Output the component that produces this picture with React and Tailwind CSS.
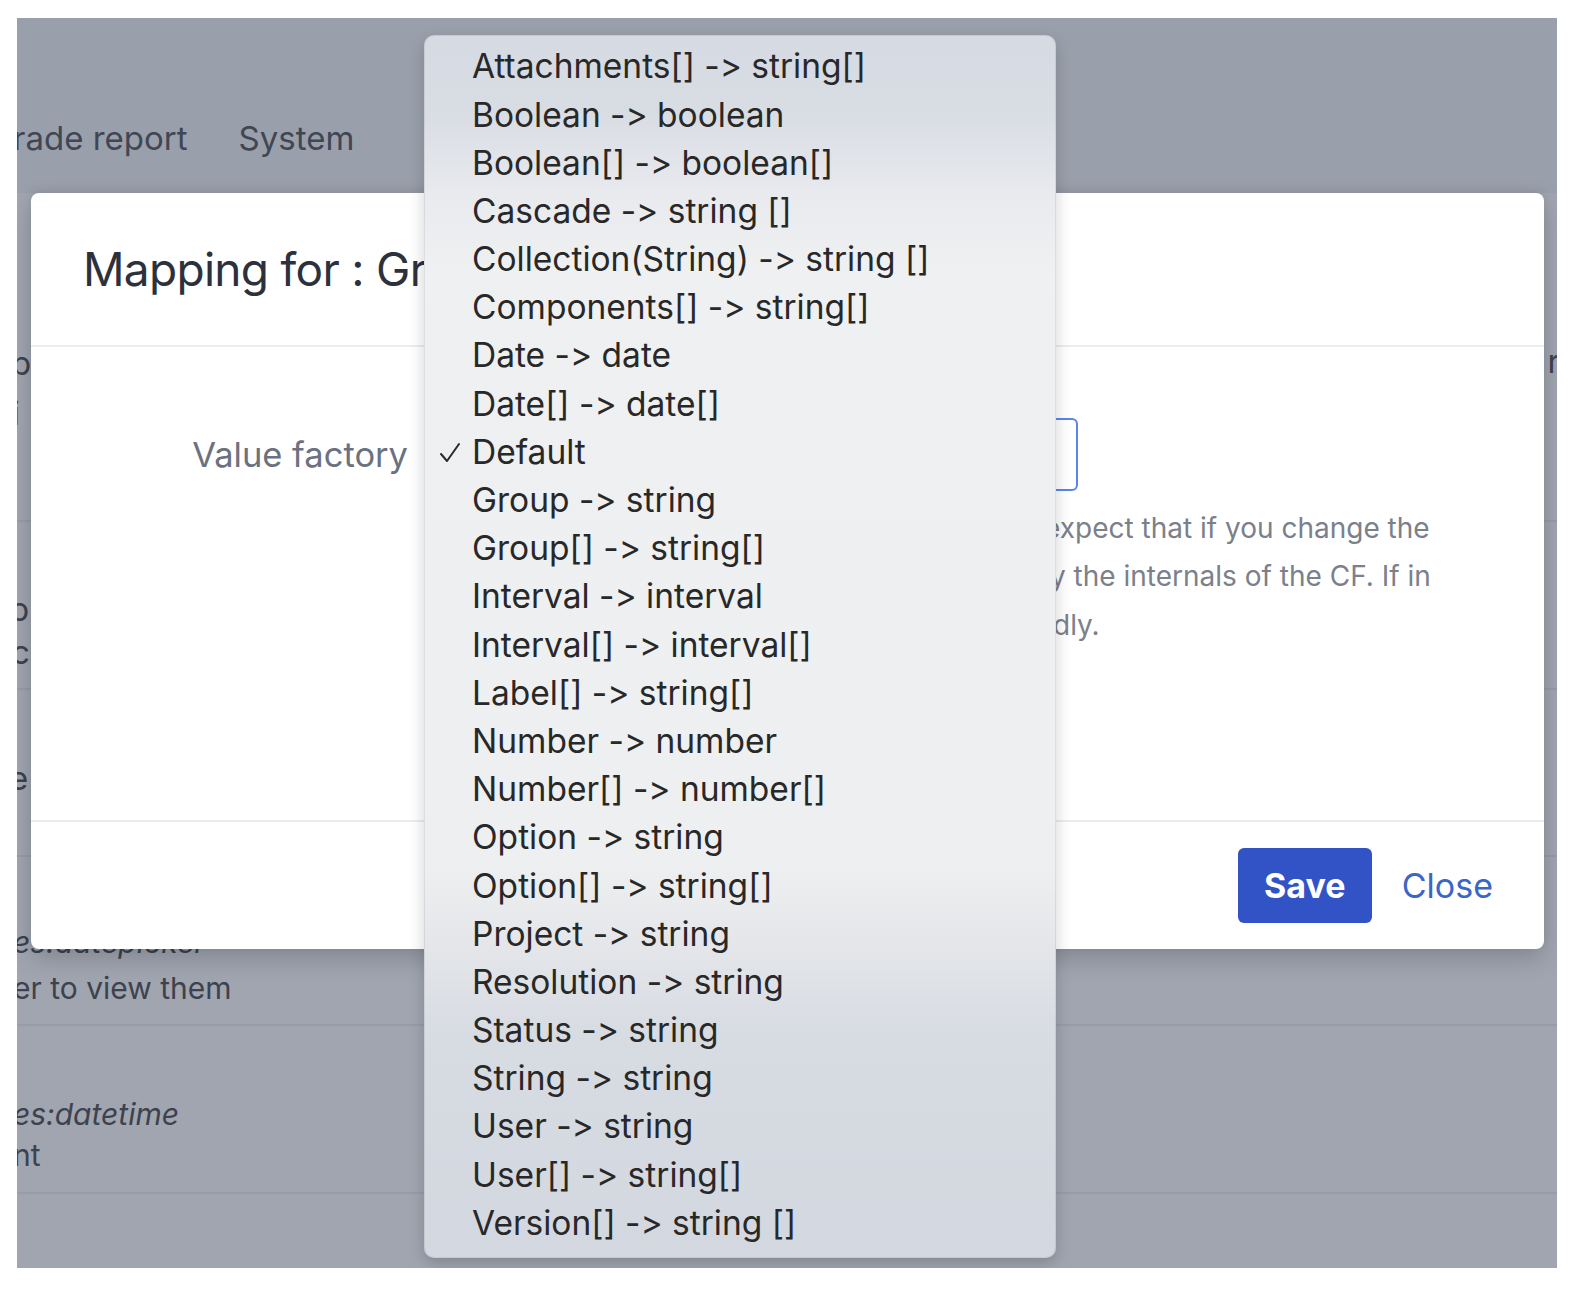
import React from "react";

const items = [
  "Attachments[] -> string[]",
  "Boolean -> boolean",
  "Boolean[] -> boolean[]",
  "Cascade -> string []",
  "Collection(String) -> string []",
  "Components[] -> string[]",
  "Date -> date",
  "Date[] -> date[]",
  "Default",
  "Group -> string",
  "Group[] -> string[]",
  "Interval -> interval",
  "Interval[] -> interval[]",
  "Label[] -> string[]",
  "Number -> number",
  "Number[] -> number[]",
  "Option -> string",
  "Option[] -> string[]",
  "Project -> string",
  "Resolution -> string",
  "Status -> string",
  "String -> string",
  "User -> string",
  "User[] -> string[]",
  "Version[] -> string []",
];

function Check() {
  return (
    <svg width="22" height="22" viewBox="0 0 22 22" fill="none">
      <polyline points="2,12 8,19 20,2" stroke="#2a2a2a" strokeWidth="2" strokeLinecap="round" strokeLinejoin="round" />
    </svg>
  );
}

export default function App() {
  return (
    <div className="w-[1580px] h-[1292px] bg-white pt-[18px] pl-[17px] font-[Inter,'Noto_Sans',sans-serif] [font-variant-ligatures:no-contextual] [font-feature-settings:'calt'_0]">
      <div className="relative w-[1540px] h-[1250px] overflow-hidden bg-[#a0a5b0]">
        {/* background page */}
        <div className="flex flex-col">
          <div className="h-[175px] bg-[#9aa0ab] pt-[100px]">
            <div className="flex items-center gap-[51px] text-[33px] leading-[40px] text-[#414654]">
              <span className="ml-[-4px]">rade report</span>
              <span>System</span>
            </div>
          </div>
          <div className="h-[329px] border-b-2 border-[#979ca7] pt-[145px] text-[33px] leading-[50px] text-[#3d424e] flex justify-between">
            <div className="flex flex-col">
              <span className="ml-[-6px]">p</span>
              <span className="ml-[-5px]">i</span>
            </div>
            <span className="mr-[-3px] mt-[-2px]">r</span>
          </div>
          <div className="h-[168px] border-b-2 border-[#979ca7] pt-[66px] text-[33px] leading-[43px] text-[#3d424e] flex flex-col">
            <span className="ml-[-8px]">b</span>
            <span className="ml-[-6px]">c</span>
          </div>
          <div className="h-[167px] border-b-2 border-[#979ca7] pt-[67px] text-[33px] leading-[43px] text-[#3d424e] flex flex-col">
            <span className="ml-[-8px]">e</span>
          </div>
          <div className="h-[169px] border-b-2 border-[#979ca7] pt-[62px] text-[30px] leading-[46px] text-[#3d424e] flex flex-col">
            <span className="ml-[-4px] italic">es:datepicker</span>
            <span className="ml-[-4px]">er to view them</span>
          </div>
          <div className="h-[168px] border-b-2 border-[#979ca7] pt-[68px] text-[30px] leading-[41px] text-[#3d424e] flex flex-col">
            <span className="ml-[-4px] italic">es:datetime</span>
            <span className="ml-[-4px]">nt</span>
          </div>
        </div>

        {/* modal */}
        <div className="absolute left-[14px] top-[175px] w-[1513px] h-[756px] bg-white rounded-[8px] shadow-[0_-3px_10px_rgba(0,0,0,0.06),0_10px_24px_rgba(0,0,0,0.18)] flex flex-col">
          <div className="h-[154px] shrink-0 flex items-center border-b-2 border-[#ebecf0] px-[52px]">
            <h2 className="text-[46px] leading-none tracking-[-0.7px] text-[#2c313c] whitespace-nowrap">Mapping for : Group Picker</h2>
          </div>
          <div className="h-[473px] shrink-0 flex flex-col px-[52px]">
            <div className="flex items-center pt-[71px]">
              <div className="w-[325px] text-right text-[34.5px] leading-[40px] text-[#6b7180]">Value factory</div>
              <div className="ml-[32px] w-[638px] h-[73px] rounded-[6px] border-2 border-[#5b86e5] flex items-center justify-between pl-[16px] pr-[18px] text-[30px] text-[#2c313c]">
                <span>Default</span>
                <svg width="20" height="20" viewBox="0 0 20 20" fill="none">
                  <path d="M4 7l6 6 6-6" stroke="#42526e" strokeWidth="2.5" strokeLinecap="round" strokeLinejoin="round" />
                </svg>
              </div>
            </div>
            <div className="ml-[357px] mt-[13px] text-[28px] leading-[48.4px] text-[#7b808b] whitespace-nowrap">
              <div className="flex">
                <span className="w-[604px] shrink-0 overflow-hidden text-right">Do not change this unless you know what to </span>
                <span>expect that if you change the</span>
              </div>
              <div className="flex">
                <span className="w-[610px] shrink-0 overflow-hidden text-right">value factory, the transformation is defined b</span>
                <span>y the internals of the CF. If in</span>
              </div>
              <div className="flex">
                <span className="w-[613px] shrink-0 overflow-hidden text-right">doubt, keep the Default and it will behave accor</span>
                <span>dly.</span>
              </div>
            </div>
          </div>
          <div className="h-[129px] shrink-0 flex items-center justify-end gap-[18px] border-t-2 border-[#ebecf0] pr-[39px]">
            <button className="h-[75px] w-[134px] rounded-[6px] bg-[#3153c6] text-white text-[34px] font-bold leading-none">Save</button>
            <button className="h-[75px] px-[12px] text-[#3b65c9] text-[34px] leading-none">Close</button>
          </div>
        </div>

        {/* dropdown menu */}
        <div className="absolute left-[407px] top-[17px] w-[632px] h-[1223px] rounded-[10px] border border-[rgba(0,0,0,0.07)] bg-[linear-gradient(180deg,#d6dae2_0%,#d8dce3_6%,#e8eaee_13%,#eff0f1_19%,#eeeff0_68%,#e3e5e9_75%,#d7dbe2_82%,#d3d7df_100%)] shadow-[0_6px_16px_rgba(0,0,0,0.18)] pt-[7px]">
          {items.map((it) => (
            <div key={it} className="h-[48.2px] flex items-center text-[33.5px] leading-none text-[#282828] whitespace-nowrap">
              <span className="w-[47px] shrink-0 flex justify-center pl-[2px]">{it === "Default" ? <Check /> : null}</span>
              <span>{it}</span>
            </div>
          ))}
        </div>
      </div>
    </div>
  );
}
